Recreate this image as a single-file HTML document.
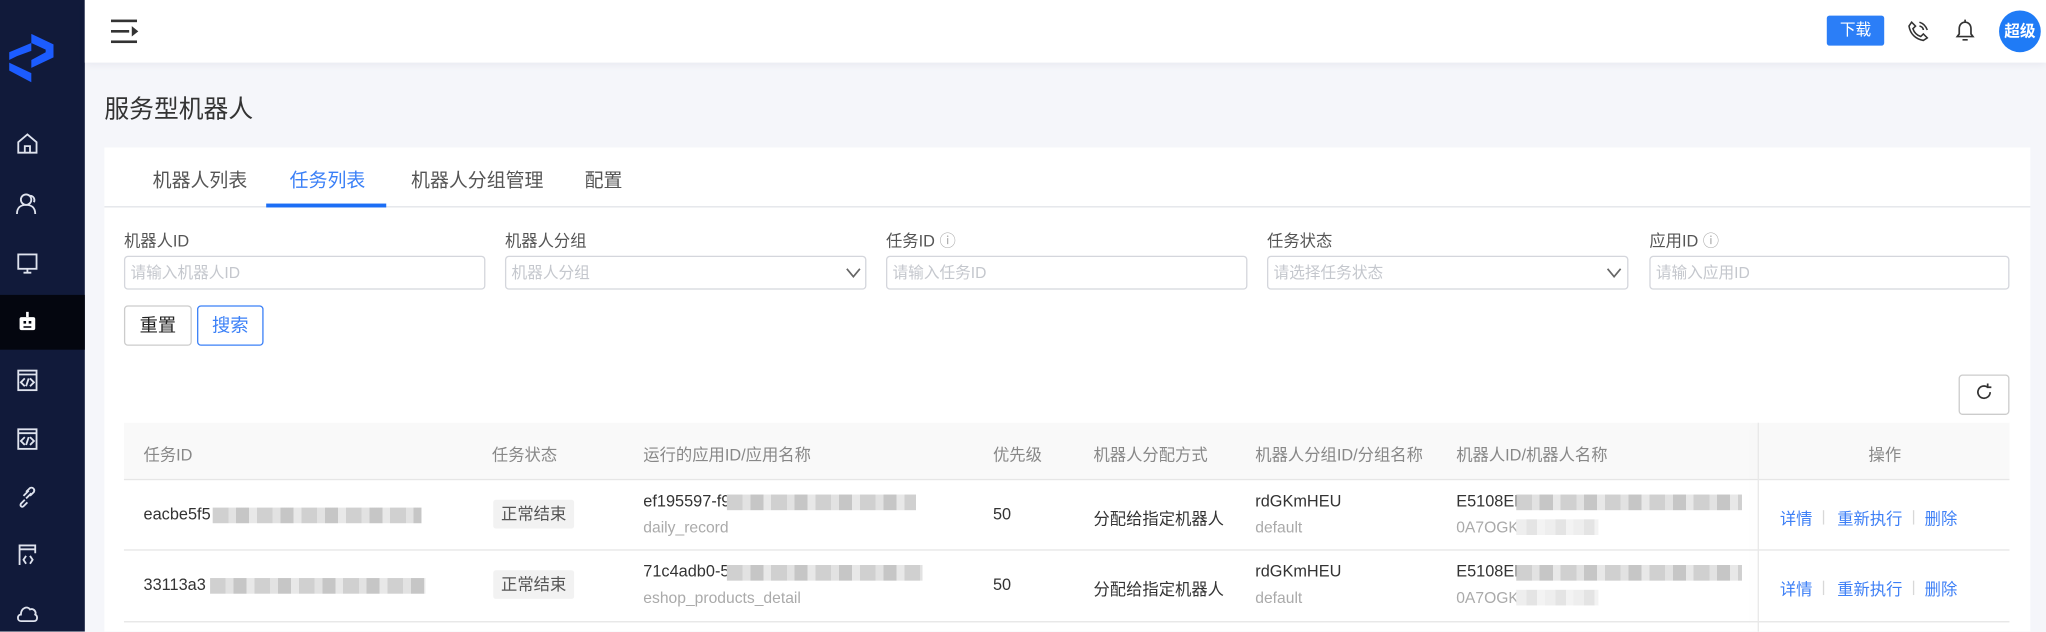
<!DOCTYPE html>
<html><head><meta charset="utf-8"><style>
html,body{margin:0;padding:0;width:2046px;height:632px;overflow:hidden;background:#f5f6fa}
#w{position:absolute;left:0;top:0;width:1568px;height:484px;transform:scale(1.30485);transform-origin:0 0;font-family:"Liberation Sans","Noto Sans CJK SC",sans-serif;color:#333;background:#f5f6fa}
.a{position:absolute;white-space:nowrap}
#side{left:0;top:0;width:65px;height:484px;background:#111a3a}
.ic{position:absolute;left:11px;width:20px;height:20px}
#hdr{left:65px;top:0;width:1503px;height:48px;background:#fff;box-shadow:0 2px 6px rgba(0,20,80,.06)}
.lbl{font-size:12.5px;color:#555;top:174px}
.inp{top:196px;height:26px;border:1px solid #d4d6dc;border-radius:3px;background:#fff;box-sizing:border-box;font-size:12px;color:#c4c7cd;line-height:24px;padding-left:4px}
.th{font-size:12.5px;color:#888;top:338px}
.td{font-size:12.5px;color:#333}
.sub{font-size:12px;color:#aaa}
.blur{position:absolute;height:12px;background:repeating-linear-gradient(90deg,#d0d0d0 0 12px,#e2e2e2 12px 18px,#c6c6c6 18px 28px,#e8e8e8 28px 34px)}
.blur2{position:absolute;height:12px;background:repeating-linear-gradient(90deg,#eee 0 8px,#e4e4e4 8px 16px,#f3f3f3 16px 22px)}
.tag{font-size:12.5px;color:#555;background:#f2f2f2;border-radius:2px;height:22px;line-height:22px;padding:0 6px}
.op{font-size:12.5px;color:#3d7ff6}
.sep{position:absolute;width:1px;height:11px;background:#d8d8d8}
</style></head><body><div id="w">
<div class="a" id="side">
<svg class="a" style="left:7px;top:26px" width="34" height="38" viewBox="0 0 34 38"><polygon points="17,0 34,8 34,18 17,26 17,20 28,14 28,12 17,7" fill="#1c5cff"/><polygon points="0,14 17,7 17,13 6,17 0,20" fill="#1c5cff"/><polygon points="0,22 17,30 17,37 0,28" fill="#1c5cff"/></svg>
<svg class="ic" style="top:100px" viewBox="0 0 20 20" fill="none" stroke="#dfe3ee" stroke-width="1.4"><path d="M3 9 L10 3 L17 9 V17 H3 Z M8 17 V12 H12 V17"/></svg>
<svg class="ic" style="top:146px" viewBox="0 0 20 20" fill="none" stroke="#dfe3ee" stroke-width="1.4"><circle cx="9" cy="7" r="4"/><path d="M2 18 C2 13 5 11 9 11 C13 11 16 13 16 18 M12 4 C15 4 16 7 15 9"/></svg>
<svg class="ic" style="top:191px" viewBox="0 0 20 20" fill="none" stroke="#dfe3ee" stroke-width="1.4"><rect x="3" y="4" width="14" height="11"/><path d="M7 18 H13 M10 15 V18"/></svg>
<div class="a" style="left:0;top:226px;width:65px;height:42px;background:#04060f"></div>
<svg class="ic" style="top:237px" viewBox="0 0 20 20" fill="#fff"><rect x="4" y="6" width="12" height="10" rx="1.5"/><rect x="9" y="2" width="2" height="4"/><rect x="7" y="9" width="2" height="2" fill="#04060f"/><rect x="11" y="9" width="2" height="2" fill="#04060f"/><rect x="7" y="13" width="6" height="1.2" fill="#04060f"/></svg>
<svg class="ic" style="top:281px" viewBox="0 0 20 20" fill="none" stroke="#dfe3ee" stroke-width="1.4"><rect x="3" y="3" width="14" height="15"/><path d="M3 6 H17 M8 9 L5 12 L8 15 M12 9 L15 12 L12 15 M11 9 L9 15"/></svg>
<svg class="ic" style="top:326px" viewBox="0 0 20 20" fill="none" stroke="#dfe3ee" stroke-width="1.4"><rect x="3" y="3" width="14" height="15"/><path d="M3 6 H17 M8 9 L5 12 L8 15 M12 9 L15 12 L12 15 M11 9 L9 15"/></svg>
<svg class="ic" style="top:371px" viewBox="0 0 20 20" fill="none" stroke="#dfe3ee" stroke-width="1.4"><path d="M9 6 L12 3 C14 2 16 4 15 6 L12 9 M8 12 L5 15 C4 17 6 18 7 17 L10 14 M7 9 L11 5 M9 11 L13 7"/></svg>
<svg class="ic" style="top:415px" viewBox="0 0 20 20" fill="none" stroke="#dfe3ee" stroke-width="1.4"><path d="M4 18 V3 H16 V9 M4 6 H16 M9 11 L7 14 L9 17 M12 11 L14 14 L12 17"/></svg>
<svg class="ic" style="top:460px" viewBox="0 0 20 20" fill="none" stroke="#dfe3ee" stroke-width="1.4"><path d="M5 16 C2 16 2 11 5 11 C5 6 10 4 12 7 C15 6 17 9 16 11 C18 12 18 16 15 16 Z"/></svg>
</div>
<div class="a" id="hdr"></div>
<svg class="a" style="left:85px;top:14px" width="24" height="20" viewBox="0 0 24 20"><rect x="0" y="1" width="20" height="2" fill="#333"/><rect x="0" y="9" width="14" height="2" fill="#333"/><rect x="0" y="17" width="20" height="2" fill="#333"/><polygon points="16,6 21,10 16,14" fill="#333"/></svg>
<div class="a" style="left:1400px;top:12px;width:44px;height:23px;background:#2b7ef7;border-radius:2px;color:#fff;font-size:12px;text-align:center;line-height:23px">下载</div>
<svg class="a" style="left:1461px;top:15px" width="18" height="18" viewBox="0 0 18 18" fill="none" stroke="#333" stroke-width="1.2"><path d="M4 2 L7 5 L5 7 C6 10 8 12 11 13 L13 11 L16 14 L13 16 C7 15 3 11 2 5 Z M10 2 C13 3 15 5 16 8 M10 5 C11 5 13 6 13 8"/></svg>
<svg class="a" style="left:1497px;top:14px" width="18" height="19" viewBox="0 0 18 19" fill="none" stroke="#333" stroke-width="1.3"><path d="M3 14 H15 L13.5 12 V8 C13.5 5 11.5 3 9 3 C6.5 3 4.5 5 4.5 8 V12 Z M7 16.5 H11 M9 1 V3"/></svg>
<div class="a" style="left:1532px;top:8px;width:32px;height:32px;border-radius:50%;background:#1f7bf6;color:#fff;font-size:12px;font-weight:bold;text-align:center;line-height:32px">超级</div>
<div class="a" style="left:80px;top:69px;font-size:19px;color:#333">服务型机器人</div>
<div class="a" style="left:80px;top:113px;width:1476px;height:371px;background:#fff"></div>
<div class="a" style="left:80px;top:158px;width:1476px;height:1px;background:#e2e3e8"></div>
<div class="a" style="left:117px;top:127px;font-size:14.5px;color:#555">机器人列表</div>
<div class="a" style="left:222px;top:127px;font-size:14.5px;color:#3b80f7">任务列表</div>
<div class="a" style="left:315px;top:127px;font-size:14.5px;color:#555">机器人分组管理</div>
<div class="a" style="left:448px;top:127px;font-size:14.5px;color:#555">配置</div>
<div class="a" style="left:204px;top:156px;width:92px;height:3px;background:#1c6ef5"></div>
<div class="a lbl" style="left:95px">机器人ID</div>
<div class="a lbl" style="left:387px">机器人分组</div>
<div class="a lbl" style="left:679px">任务ID <span style="color:#aaa">ⓘ</span></div>
<div class="a lbl" style="left:971px">任务状态</div>
<div class="a lbl" style="left:1264px">应用ID <span style="color:#aaa">ⓘ</span></div>
<div class="a inp" style="left:95px;width:277px">请输入机器人ID</div>
<div class="a inp" style="left:387px;width:277px">机器人分组</div>
<div class="a inp" style="left:679px;width:277px">请输入任务ID</div>
<div class="a inp" style="left:971px;width:277px">请选择任务状态</div>
<div class="a inp" style="left:1264px;width:276px">请输入应用ID</div>
<svg class="a" style="left:648px;top:204px" width="12" height="10" viewBox="0 0 12 10" fill="none" stroke="#666" stroke-width="1.3"><path d="M1 2 L6 8 L11 2"/></svg>
<svg class="a" style="left:1231px;top:204px" width="12" height="10" viewBox="0 0 12 10" fill="none" stroke="#666" stroke-width="1.3"><path d="M1 2 L6 8 L11 2"/></svg>
<div class="a" style="left:95px;top:234px;width:52px;height:31px;border:1px solid #ccc;border-radius:3px;box-sizing:border-box;font-size:14px;text-align:center;line-height:29px;color:#222">重置</div>
<div class="a" style="left:151px;top:234px;width:51px;height:31px;border:1px solid #3b80f7;border-radius:3px;box-sizing:border-box;font-size:14px;text-align:center;line-height:29px;color:#3b80f7">搜索</div>
<div class="a" style="left:1501px;top:287px;width:39px;height:31px;border:1px solid #ccc;border-radius:3px;box-sizing:border-box"></div>
<svg class="a" style="left:1513px;top:293px" width="15" height="15" viewBox="0 0 16 16" fill="none" stroke="#333" stroke-width="1.4"><path d="M13 8 A5 5 0 1 1 11 4 M11 1 V4 H14"/></svg>
<div class="a" style="left:95px;top:324px;width:1445px;height:43px;background:#f9f9f9"></div>
<div class="a" style="left:95px;top:367px;width:1445px;height:1px;background:#e6e6e6"></div>
<div class="a" style="left:95px;top:421px;width:1445px;height:1px;background:#e6e6e6"></div>
<div class="a" style="left:95px;top:476px;width:1445px;height:1px;background:#e6e6e6"></div>
<div class="a" style="left:1347px;top:324px;width:1px;height:160px;background:#e8e8e8;box-shadow:-3px 0 6px rgba(0,0,0,.06)"></div>
<div class="a th" style="left:110px">任务ID</div>
<div class="a th" style="left:377px">任务状态</div>
<div class="a th" style="left:493px">运行的应用ID/应用名称</div>
<div class="a th" style="left:761px">优先级</div>
<div class="a th" style="left:838px">机器人分配方式</div>
<div class="a th" style="left:962px">机器人分组ID/分组名称</div>
<div class="a th" style="left:1116px">机器人ID/机器人名称</div>
<div class="a th" style="left:1432px">操作</div>
<div class="a td" style="left:110px;top:387px">eacbe5f5</div><div class="blur" style="left:163px;top:389px;width:160px"></div>
<div class="a tag" style="left:378px;top:383px">正常结束</div>
<div class="a td" style="left:493px;top:377px">ef195597-f9</div><div class="blur" style="left:557px;top:379px;width:145px"></div>
<div class="a sub" style="left:493px;top:397px">daily_record</div>
<div class="a td" style="left:761px;top:387px">50</div>
<div class="a td" style="left:838px;top:387px">分配给指定机器人</div>
<div class="a td" style="left:962px;top:377px">rdGKmHEU</div><div class="a sub" style="left:962px;top:397px">default</div>
<div class="a td" style="left:1116px;top:377px">E5108EF</div><div class="blur" style="left:1162px;top:379px;width:173px"></div>
<div class="a sub" style="left:1116px;top:397px">0A7OGK</div><div class="blur2" style="left:1162px;top:398px;width:63px"></div>
<div class="a op" style="left:1364px;top:387px">详情</div><div class="sep" style="left:1397px;top:391px"></div>
<div class="a op" style="left:1408px;top:387px">重新执行</div><div class="sep" style="left:1466px;top:391px"></div>
<div class="a op" style="left:1475px;top:387px">删除</div>
<div class="a td" style="left:110px;top:441px">33113a3</div><div class="blur" style="left:161px;top:443px;width:165px"></div>
<div class="a tag" style="left:378px;top:437px">正常结束</div>
<div class="a td" style="left:493px;top:431px">71c4adb0-5</div><div class="blur" style="left:557px;top:433px;width:150px"></div>
<div class="a sub" style="left:493px;top:451px">eshop_products_detail</div>
<div class="a td" style="left:761px;top:441px">50</div>
<div class="a td" style="left:838px;top:441px">分配给指定机器人</div>
<div class="a td" style="left:962px;top:431px">rdGKmHEU</div><div class="a sub" style="left:962px;top:451px">default</div>
<div class="a td" style="left:1116px;top:431px">E5108EF</div><div class="blur" style="left:1162px;top:433px;width:173px"></div>
<div class="a sub" style="left:1116px;top:451px">0A7OGK</div><div class="blur2" style="left:1162px;top:452px;width:63px"></div>
<div class="a op" style="left:1364px;top:441px">详情</div><div class="sep" style="left:1397px;top:445px"></div>
<div class="a op" style="left:1408px;top:441px">重新执行</div><div class="sep" style="left:1466px;top:445px"></div>
<div class="a op" style="left:1475px;top:441px">删除</div>
</div></body></html>
